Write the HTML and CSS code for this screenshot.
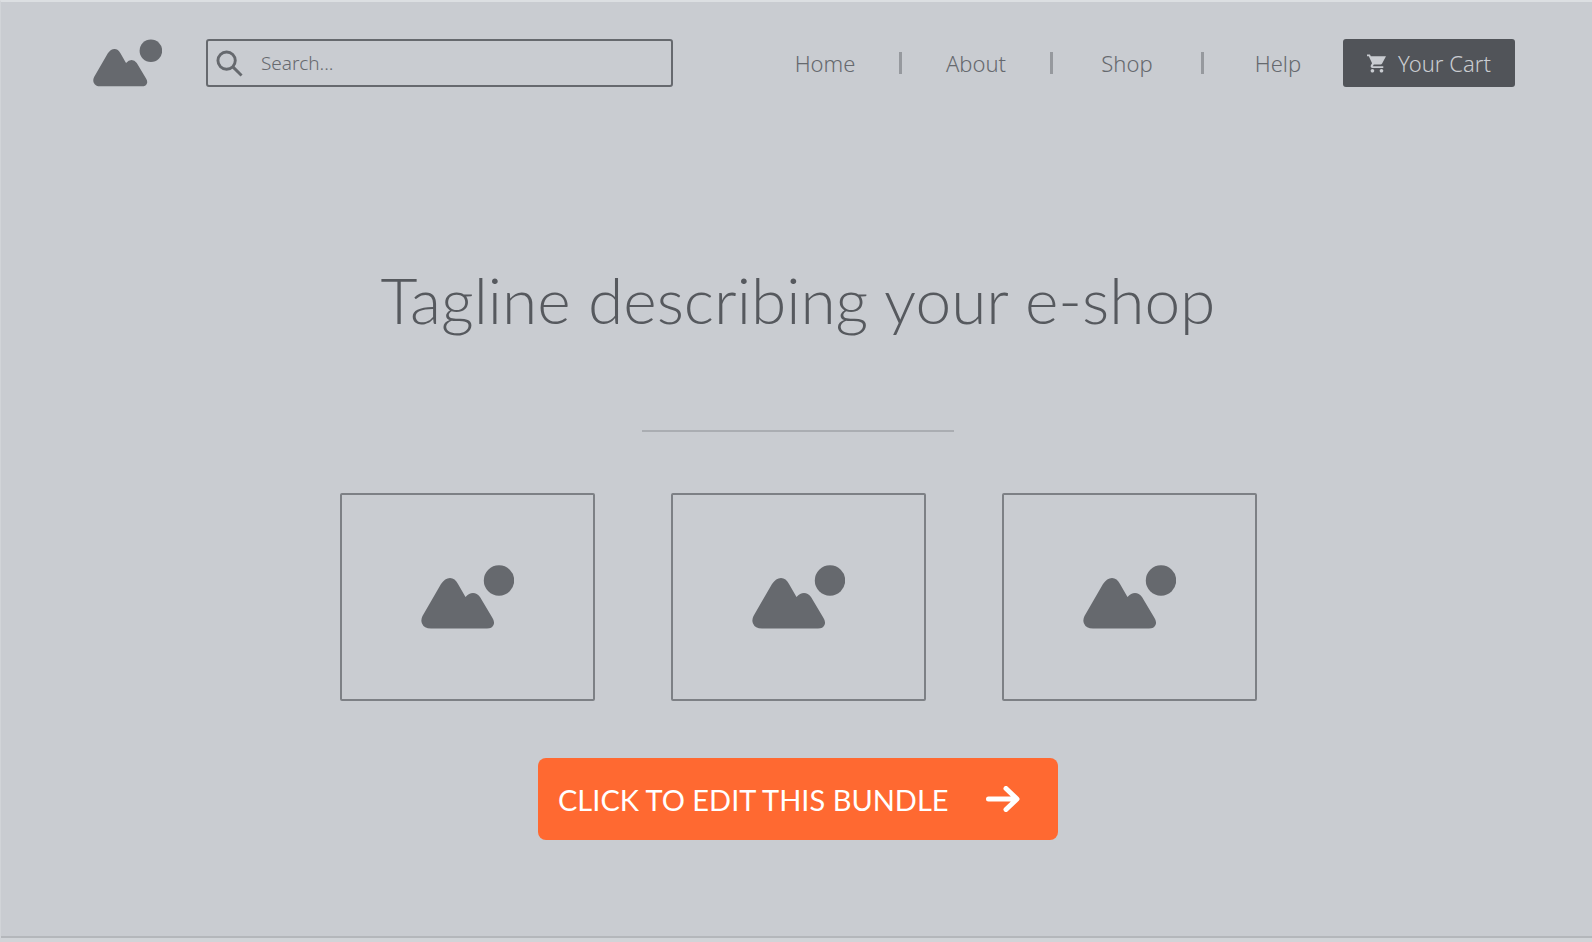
FILE: index.html
```
<!DOCTYPE html>
<html lang="en">

<head>
    <meta charset="utf-8">
    <meta name="viewport" content="width=device-width, initial-scale=1.0">
    <title>E-shop</title>
    <link rel="stylesheet" href="styles.css">
</head>

<body>
    <!-- mountains and sun, used for the logo and the product cards -->
    <svg class="symbols" aria-hidden="true">
        <symbol id="mountains" viewBox="0 0 93 64">
            <path d="M1.500 51 L20 19 Q24 13 29 13 Q34 13 37 19 L44.500 32 Q48 28 52 28 Q56 28 59 32 L71.500 53 Q74 57 72.500 60 Q71 63.500 66 63.500 H10 Q3 63.500 1 58.500 Q-.500 55 1.500 51Z" />
            <circle cx="78" cy="15.500" r="15.200" />
        </symbol>
    </svg>

    <header class="topbar">
        <a href="#" class="logo" aria-label="Home page">
            <svg><use href="#mountains" /></svg>
        </a>
        <form class="search">
            <svg viewBox="0 0 28 28" aria-hidden="true">
                <circle cx="11" cy="11" r="9" />
                <path d="M17.500 17.500L26.500 26.500" />
            </svg>
            <input type="text" placeholder="Search..." aria-label="Search">
        </form>
        <nav class="menu">
            <a href="#">Home</a>
            <span class="separator"></span>
            <a href="#">About</a>
            <span class="separator"></span>
            <a href="#">Shop</a>
            <span class="separator"></span>
            <a href="#">Help</a>
        </nav>
        <button class="cart">
            <svg viewBox="1 2 21 20" aria-hidden="true">
                <path d="M7 18c-1.100 0-2 .9-2 2s.9 2 2 2 2-.9 2-2-.9-2-2-2zM1 2v2h2l3.600 7.600-1.350 2.450C4.520 15.370 5.480 17 7 17h12v-2H7.420l1.100-2h7.450c.75 0 1.410-.410 1.750-1.030L22 4H5.210l-.940-2H1zm16 16c-1.100 0-2 .9-2 2s.9 2 2 2 2-.9 2-2-.9-2-2-2z" />
            </svg>
            <span>Your Cart</span>
        </button>
    </header>

    <main>
        <h1>Tagline describing your e-shop</h1>
        <hr>
        <section class="cards">
            <article class="card"><svg><use href="#mountains" /></svg></article>
            <article class="card"><svg><use href="#mountains" /></svg></article>
            <article class="card"><svg><use href="#mountains" /></svg></article>
        </section>
        <button class="edit">
            <span>CLICK TO EDIT THIS BUNDLE</span>
            <svg viewBox="0 0 34 26" aria-hidden="true">
                <path d="M2.500 13H30M20 2.500L31 13L20 23.500" />
            </svg>
        </button>
    </main>
</body>

</html>
```
FILE: styles.css
```
* {
    box-sizing: border-box;
}

body {
    margin: 0;
    min-height: 100vh;
    background-color: #c9ccd1;
    border-top: 2px solid #dcdfe2;
    border-left: 1px solid #d1d4d8;
    border-bottom: 4px solid #d1d4d8;
    box-shadow: inset 0 -2px #b4b7bb;
    color: #66696e;
    font-family: "Noto Sans", sans-serif;
    font-weight: 300;
}

button,
input {
    font: inherit;
}

.symbols {
    display: none;
}

.topbar {
    display: flex;
    align-items: center;
    padding: 37px 77px 0 92px;
}

.logo {
    margin-right: 44px;
}

.logo svg {
    display: block;
    width: 69px;
    height: 48px;
    fill: #66696e;
}

.search {
    display: flex;
    align-items: center;
    flex: 0 1 467px;
    height: 48px;
    padding: 0 8px;
    border: 2px solid #66696e;
    border-radius: 3px;
}

.search svg {
    flex: none;
    width: 27px;
    height: 27px;
    fill: none;
    stroke: #66696e;
    stroke-width: 3;
}

.search input {
    flex: 1;
    min-width: 0;
    padding: 0;
    margin-left: 18px;
    border: none;
    background: none;
    outline: none;
    color: #66696e;
    font-size: 19px;
}

.search input::placeholder {
    color: #66696e;
    opacity: 1;
}

.menu {
    display: flex;
    align-items: center;
    gap: 21px;
    margin-left: auto;
}

.menu a {
    width: 106px;
    color: #66696e;
    font-size: 22px;
    line-height: 32px;
    text-align: center;
    text-decoration: none;
}

.separator {
    width: 3px;
    height: 22px;
    background-color: #96999e;
}

.cart {
    display: flex;
    align-items: center;
    justify-content: center;
    gap: 12px;
    width: 172px;
    height: 48px;
    margin-left: 12px;
    padding: 0;
    border: none;
    border-radius: 3px;
    background-color: #515459;
    color: #c9ccd1;
    font-size: 22px;
}

.cart svg {
    width: 19px;
    height: 19px;
    fill: #c9ccd1;
}

main {
    display: flex;
    flex-direction: column;
    align-items: center;
    padding-left: 3px;
}

h1 {
    margin: 173px 0 0;
    color: #56595e;
    font-family: Lato, sans-serif;
    font-size: 64px;
    font-weight: 300;
    line-height: 80px;
    text-align: center;
}

hr {
    width: 312px;
    height: 2px;
    margin: 90px 0 0;
    border: none;
    background-color: #aaadb2;
}

.cards {
    display: flex;
    gap: 76px;
    margin-top: 61px;
}

.card {
    display: flex;
    align-items: center;
    justify-content: center;
    width: 255px;
    height: 208px;
    border: 2px solid #7d8085;
    border-radius: 2px;
}

.card svg {
    width: 93px;
    height: 64px;
    fill: #66696e;
}

.edit {
    display: flex;
    align-items: center;
    justify-content: space-between;
    width: 520px;
    height: 82px;
    margin: 57px 0 0;
    padding: 0 38px 0 20px;
    border: none;
    border-radius: 8px;
    background-color: #ff6931;
    color: #fff;
    font-family: Lato, sans-serif;
    font-size: 29px;
    font-weight: 400;
}

.edit svg {
    width: 34px;
    height: 26px;
    fill: none;
    stroke: #fff;
    stroke-width: 5;
    stroke-linecap: round;
    stroke-linejoin: round;
}
```
